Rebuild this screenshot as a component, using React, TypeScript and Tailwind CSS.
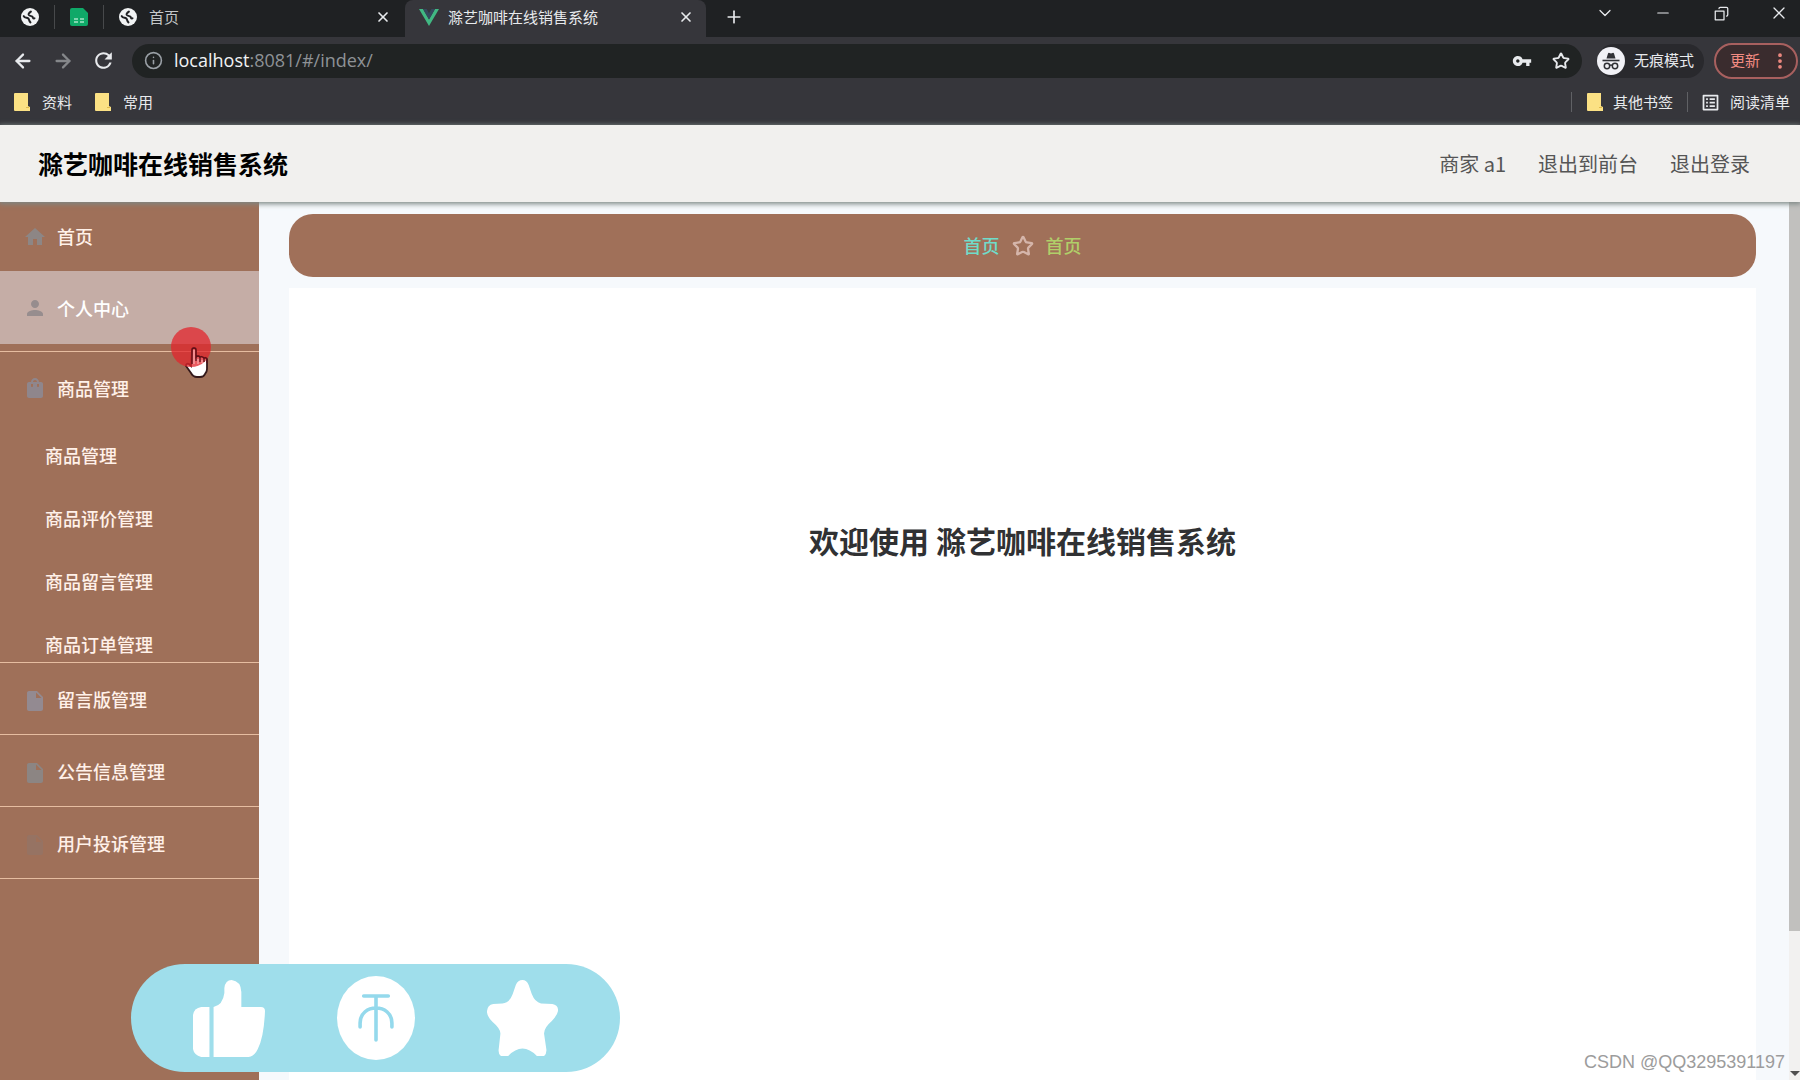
import React from 'react';
import {
  ArrowLeft,
  ArrowRight,
  ChevronDown,
  Copy,
  Info,
  Minus,
  MoreVertical,
  Plus,
  Star,
  X,
} from 'lucide-react';
import { MdHome, MdInsertDriveFile, MdOutlineListAlt, MdPerson, MdRefresh, MdShoppingBag, MdVpnKey } from 'react-icons/md';

const GlobeIcon: React.FC = () => (
  <svg viewBox="0 0 20 20" className="h-[18px] w-[18px] shrink-0">
    <circle cx="10" cy="10" r="10" fill="#f1f3f4" />
    <path
      d="M3 9c1 2.500 3.500 1.500 5 2.500 1.500 1 .5 3 2.500 4.500M11 4c-1.500 1-3 2-2.500 3.500.5 1.300 2.500 1 4 2 1 1 .5 2.500 2.500 2"
      fill="none"
      stroke="#202124"
      strokeWidth="2.2"
      strokeLinecap="round"
    />
  </svg>
);

const SheetIcon: React.FC = () => (
  <svg viewBox="0 0 18 18" className="h-[18px] w-[18px]">
    <path d="M2 0h11l5 5v11a2 2 0 0 1-2 2H2a2 2 0 0 1-2-2V2a2 2 0 0 1 2-2z" fill="#0fa968" />
    <path d="M4 11h4M10 11h4M4 14h4M10 14h4" stroke="#a5e3c6" strokeWidth="1.4" />
  </svg>
);

const VueIcon: React.FC = () => (
  <svg viewBox="0 0 20 17" className="h-[17px] w-5 shrink-0">
    <path d="M0 0h4l6 10.400L16 0h4L10 17z" fill="#41b883" />
    <path d="M4 0h3.600L10 4.200 12.400 0H16l-6 10.400z" fill="#35495e" />
  </svg>
);

const FolderIcon: React.FC = () => (
  <svg viewBox="0 0 16 18" className="h-[18px] w-4">
    <path d="M0 1a1 1 0 0 1 1-1h13v13l2 1v4H1a1 1 0 0 1-1-1z" fill="#fbe184" />
    <path d="M12 14.500h3" stroke="#e0b94a" strokeWidth="1" />
  </svg>
);

const IncognitoIcon: React.FC = () => (
  <svg viewBox="0 0 28 28" className="h-7 w-7">
    <circle cx="14" cy="14" r="14" fill="#f1f1f6" />
    <path d="M9.500 11.500 11 6.500q.4-1 1.500-.6l1.500.5 1.500-.5q1.100-.4 1.500.6l1.500 5z" fill="#303136" />
    <path d="M5.500 13.500h17" stroke="#303136" strokeWidth="1.600" />
    <g fill="none" stroke="#303136" strokeWidth="1.500">
      <circle cx="10" cy="19" r="2.700" />
      <circle cx="18" cy="19" r="2.700" />
      <path d="M12.700 18.500q1.300-1 2.600 0" />
    </g>
  </svg>
);

const submenu = ['商品管理', '商品评价管理', '商品留言管理', '商品订单管理'];
const bottomMenu = [
  { label: '留言版管理', color: 'text-[#938a91]' },
  { label: '公告信息管理', color: 'text-[#8c8583]' },
  { label: '用户投诉管理', color: 'text-[#967363]' },
];

const BrowserBar: React.FC = () => (
  <div className="bg-[#36363b] text-[15px] text-[#e8eaed]">
    <div className="flex h-[37px] items-start bg-[#1f2123]">
      <div className="flex h-[34px] items-center pl-[21px]">
        <button aria-label="网页"><GlobeIcon /></button>
        <span className="ml-[15px] mr-[15px] h-6 w-px bg-[#47494b]" />
        <button aria-label="表格"><SheetIcon /></button>
        <span className="mx-[15px] h-6 w-px bg-[#47494b]" />
      </div>
      <div className="flex h-[34px] w-[286px] items-center gap-3 pr-[14px]">
        <GlobeIcon />
        <span className="grow text-[#c4c7c9]">首页</span>
        <button aria-label="关闭首页"><X size={16} strokeWidth={2.5} /></button>
      </div>
      <div className="flex h-[37px] w-[301px] items-center gap-[9px] rounded-t-lg bg-[#36363b] pb-[3px] pl-[14px] pr-3">
        <VueIcon />
        <span className="grow whitespace-nowrap">滁艺咖啡在线销售系统</span>
        <button aria-label="关闭标签页"><X size={16} strokeWidth={2.5} /></button>
      </div>
      <button aria-label="新标签页" className="flex h-[34px] w-14 items-center justify-center">
        <Plus size={20} />
      </button>
      <div className="ml-auto flex h-[26px] items-center gap-4">
        <button aria-label="搜索标签页" className="flex w-[42px] justify-center"><ChevronDown size={20} strokeWidth={1.5} /></button>
        <button aria-label="最小化" className="flex w-[42px] justify-center"><Minus size={18} strokeWidth={1.5} /></button>
        <button aria-label="还原" className="flex w-[42px] justify-center"><Copy size={15} strokeWidth={2} className="-scale-x-100 [&_rect]:[rx:0]" /></button>
        <button aria-label="关闭窗口" className="flex w-[42px] justify-center"><X size={20} strokeWidth={1.5} /></button>
      </div>
    </div>

    <div className="flex h-[47px] items-center pl-3 pr-[2px]">
      <button aria-label="后退"><ArrowLeft size={22} strokeWidth={2.5} /></button>
      <button aria-label="前进" className="ml-[18px] text-[#85878a]"><ArrowRight size={22} strokeWidth={2.5} /></button>
      <button aria-label="刷新" className="ml-[17px]"><MdRefresh size={25} /></button>
      <div className="ml-4 flex h-[34px] grow items-center rounded-full bg-[#202323] pl-[12px] pr-3">
        <Info size={19} className="text-[#9aa0a6]" />
        <span className="ml-[11px] grow font-['Open_Sans',sans-serif] text-[18px] text-[#8e9296]">
          <span className="text-[#f1f3f4]">localhost</span>:8081/#/index/
        </span>
        <button aria-label="密码"><MdVpnKey size={20} /></button>
        <button aria-label="收藏" className="ml-5"><Star size={18} strokeWidth={2.5} /></button>
      </div>
      <div className="ml-[15px] flex h-[34px] items-center gap-[9px] rounded-full bg-[#29292d] pr-[10px]">
        <IncognitoIcon />
        <span>无痕模式</span>
      </div>
      <button className="ml-[10px] flex h-9 items-center gap-[10px] rounded-full border-2 border-[#a8605f] bg-[#3a2c2e] pl-[14px] pr-[6px] text-[#f28b82]">
        更新
        <MoreVertical size={20} strokeWidth={2.5} />
      </button>
    </div>

    <div className="flex h-[41px] items-center pb-[5px] pl-[14px] pr-[10px]">
      <button className="flex items-center gap-3"><FolderIcon />资料</button>
      <button className="ml-[23px] flex items-center gap-3"><FolderIcon />常用</button>
      <span className="ml-auto mr-[15px] h-5 w-px bg-[#606165]" />
      <button className="flex items-center gap-[10px]"><FolderIcon />其他书签</button>
      <span className="ml-[14px] mr-3 h-5 w-px bg-[#606165]" />
      <button className="flex items-center gap-[9px]"><MdOutlineListAlt size={21} />阅读清单</button>
    </div>
  </div>
);

const Sidebar: React.FC = () => (
  <nav className="w-[259px] shrink-0 bg-[#9f7059] text-[18px] font-medium text-[#fff1e9]">
    <a href="#/index" className="flex h-[69px] items-center gap-[10px] pl-[23px]">
      <MdHome size={24} className="text-[#8d8685]" />
      首页
    </a>
    <div className="border-b border-[#e6bda1] pb-[7px]">
      <a href="#/center" className="flex h-[73px] items-center gap-[10px] bg-[#c5ada6] pl-[23px] pt-px text-white">
        <MdPerson size={24} className="text-[#978d8e]" />
        个人中心
      </a>
    </div>
    <div className="border-b border-[#e6bda1]">
      <button className="flex h-[72px] w-full items-center gap-[10px] pl-[23px]">
        <MdShoppingBag size={24} className="text-[#8f868c]" />
        商品管理
      </button>
      <ul className="h-[238px] overflow-hidden">
        {submenu.map((label) => (
          <li key={label}>
            <a href="#/goods" className="block h-[63px] pl-[45px] leading-[62px]">{label}</a>
          </li>
        ))}
      </ul>
    </div>
    {bottomMenu.map((item) => (
      <a key={item.label} href="#/list" className="flex h-[72px] items-center gap-[10px] border-b border-[#e6bda1] pl-[23px] pt-1">
        <MdInsertDriveFile size={24} className={item.color} />
        <span className="h-8 leading-7">{item.label}</span>
      </a>
    ))}
  </nav>
);

const ReactionBar: React.FC = () => (
  <div className="absolute bottom-2 left-[131px] flex h-[108px] items-center gap-[72px] rounded-full bg-[#9fdeeb] px-[62px]">
    <button aria-label="点赞">
      <svg viewBox="0 0 70 77" preserveAspectRatio="none" className="h-[77px] w-[72px]" fill="#fff">
        <path d="M8 27h8v50H8q-7-2-8-8V35q1-7 8-8z" />
        <path d="M20 27q9-2 10.500-14V8q1-8 7-8 9 1 9.500 12v15h19q4 0 4 4-1 26-7 38-3 7-9 8H20z" />
      </svg>
    </button>
    <button aria-label="投币">
      <svg viewBox="0 0 76 84" preserveAspectRatio="none" className="h-[84px] w-[78px]">
        <ellipse cx="38" cy="42" rx="38" ry="42" fill="#fff" />
        <path d="M26 20h24M38 21v43M22.500 51v-4c0-20 31-20 31 0v4" fill="none" stroke="#94d9ec" strokeWidth="3.5" strokeLinecap="round" />
      </svg>
    </button>
    <button aria-label="收藏">
      <svg viewBox="0 0 69 76" preserveAspectRatio="none" className="h-[76px] w-[71px]" fill="#fff">
        <path d="M34.500 0q4 0 6 5l3 9q3 8 9 9.500l11 .5q6 1 5.500 7-.5 4-6 10-8 7-7.500 13l2 14q1 5-2 8h-7q-14-15-28 0h-7q-3-2-2-8l1.500-14q.5-5-7.500-12-6-6-5.500-11 .5-6 6-7l9-.5q7-.5 10-9.500l3-9q2-5 6.500-5z" />
      </svg>
    </button>
  </div>
);

const Pointer: React.FC = () => (
  <svg viewBox="0 0 42 52" className="pointer-events-none absolute left-[170px] top-[326px] h-[52px] w-[42px]">
    <path
      d="M22 24q0-2 2-2t2 2v7q2-2 4 0 2-1 4 1 3-1 3 2v9q0 3-2 5-1 3-5 3h-3q-4 0-6-4l-5-7q0-3 3-2l2 2z"
      fill="#fff"
      stroke="#33191b"
      strokeWidth="1.8"
    />
    <circle cx="21" cy="21" r="20" fill="#e1262c" fillOpacity=".75" />
    <path d="M22 38V24q0-2 2-2t2 2v11M26 31q2-2 4 0v5M30 31q2-1 4 1v4M34 32q3-1 3 2v3" fill="none" stroke="#5a1018" strokeWidth="1.3" />
    <path d="M24 24v14M28 33v5M32 34v3" fill="none" stroke="#f59a9c" strokeWidth="1.6" />
  </svg>
);

const App: React.FC = () => {
  return (
    <div className="relative flex h-screen flex-col overflow-hidden font-['Noto_Sans_CJK_SC',sans-serif]">
      <BrowserBar />
      <header className="relative flex h-[77px] shrink-0 items-center bg-[#f1f0ee] pl-[38px] pr-[50px] shadow-[0_1px_5px_1px_#7d8785]">
        <h1 className="text-[25px] font-bold text-black">滁艺咖啡在线销售系统</h1>
        <div className="ml-auto flex gap-8 text-[20px] text-[#555]">
          <span>商家 a1</span>
          <button>退出到前台</button>
          <button>退出登录</button>
        </div>
      </header>

      <div className="flex min-h-0 grow">
        <Sidebar />
        <main className="flex min-w-0 grow flex-col bg-[#f6f9fc] pl-[30px] pr-[33px] pt-3">
          <div className="flex h-[63px] shrink-0 items-center justify-center gap-3 rounded-[24px] bg-[#a07059] text-[18px] font-medium">
            <a href="#/index" className="text-[#6fdcca]">首页</a>
            <Star size={22} strokeWidth={2.5} className="text-[#d5b5aa]" />
            <span className="text-[#b0cf69]">首页</span>
          </div>
          <div className="mt-[11px] grow bg-white pt-[228px] text-center">
            <h2 className="text-[30px] font-bold leading-[48px] text-[#303133]">欢迎使用 滁艺咖啡在线销售系统</h2>
          </div>
        </main>
        <div className="flex w-[11px] flex-col items-end justify-between overflow-hidden bg-[#f2f1f0]">
          <div className="h-[83%] w-full bg-[#c1c0be]" />
          <span className="mb-1 h-0 w-0 border-x-[5px] border-t-[5px] border-x-transparent border-t-[#505050]" />
        </div>
      </div>

      <Pointer />
      <ReactionBar />
      <span className="absolute bottom-1 right-[15px] font-['Liberation_Sans',sans-serif] text-[18px] text-[#9c9c9c]">
        CSDN @QQ3295391197
      </span>
    </div>
  );
};

export default App;
